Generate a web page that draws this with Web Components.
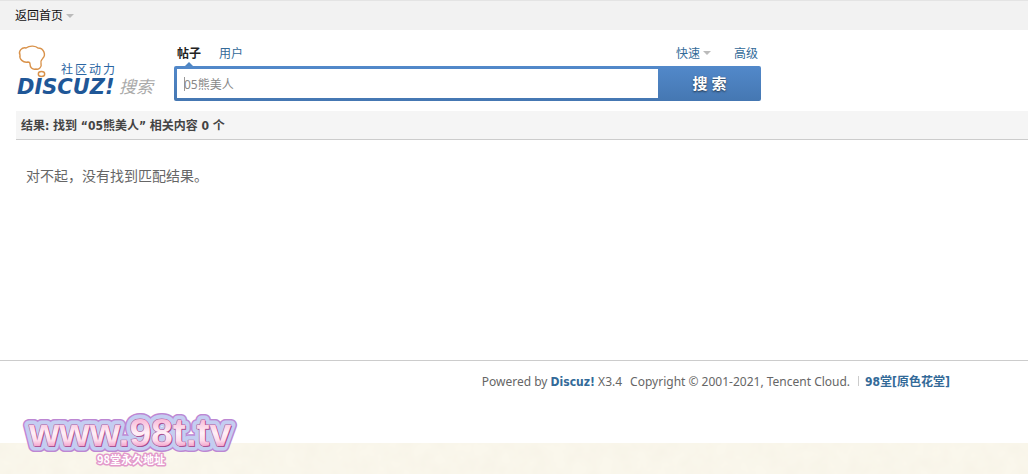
<!DOCTYPE html>
<html lang="zh-CN">
<head>
<meta charset="utf-8">
<title>搜索</title>
<style>
    body {
        margin: 0;
        min-height: 100vh;
        display: flex;
        flex-direction: column;
        background: #fff;
        color: #444;
        font: 12px/16px "Noto Sans", "Noto Sans CJK SC", sans-serif;
    }
</style>
</head>
<body>
<app-toolbar>返回首页</app-toolbar>
<app-search>
    <app-logo slot="logo"></app-logo>
</app-search>
<app-results>
    <span slot="title">结果: 找到 “05熊美人” 相关内容 0 个</span>
    对不起，没有找到匹配结果。
</app-results>
<app-footer></app-footer>
<app-paper></app-paper>
<app-watermark></app-watermark>

<script>
class AppToolbar extends HTMLElement {
    constructor() {
        super();
        this.attachShadow({ mode: 'open' });
    }

    connectedCallback() {
        this.shadowRoot.innerHTML = `
        <style>
        :host {
            display: block;
            box-sizing: border-box;
            height: 30px;
            padding: 7px 15px;
            border-top: 1px solid #e4e4e4;
            background: #f2f2f2;
        }
        a {
            display: inline-flex;
            align-items: center;
            gap: 3px;
            color: #111;
            text-decoration: none;
        }
        a::after {
            content: "";
            border: 4px solid transparent;
            border-top-color: #bbb;
            border-bottom: 0;
        }
        </style>
        <a href="#"><slot></slot></a>`;
    }
}

class AppLogo extends HTMLElement {
    constructor() {
        super();
        this.attachShadow({ mode: 'open' });
    }

    connectedCallback() {
        this.shadowRoot.innerHTML = `
        <style>
        :host {
            display: block;
        }
        svg {
            display: block;
        }
        .name {
            font: italic bold 21px "DejaVu Sans", sans-serif;
            fill: #1f5797;
        }
        .motto {
            font: 12px "Noto Sans CJK SC", sans-serif;
            letter-spacing: 2px;
            fill: #2b66a3;
        }
        .part {
            font: italic 17px "Noto Sans CJK SC", sans-serif;
            fill: #aaa;
        }
        </style>
        <svg width="142" height="60" viewBox="0 0 142 60">
            <g fill="none" stroke="#d9924a" stroke-width="1.4">
                <path d="M12 22C7 23 3 19 4 15C2 11 6 7 10 8C14 5 20 6 22 8C28 8 30 15 27 18C26 20 24 21 25 23C26 27 23 30 20 29C16 30 14 27 14 24C14 22 13 22 12 22Z"/>
                <ellipse cx="25.500" cy="34" rx="3.200" ry="2.500"/>
            </g>
            <text class="motto" x="45" y="34">社区动力</text>
            <text class="name" x="1" y="54">DISCUZ!</text>
            <text class="part" x="103" y="53">搜索</text>
        </svg>`;
    }
}

class AppSearch extends HTMLElement {
    constructor() {
        super();
        this.attachShadow({ mode: 'open' });
    }

    connectedCallback() {
        this.shadowRoot.innerHTML = `
        <style>
        :host {
            display: flex;
            gap: 16px;
            padding: 10px 16px;
        }
        form {
            flex: 0 1 587px;
            padding-top: 6px;
        }
        nav {
            display: flex;
            gap: 18px;
            height: 20px;
            padding: 0 3px;
        }
        a {
            color: #336a98;
            text-decoration: none;
        }
        .current {
            position: relative;
            color: #222;
            font-weight: bold;
        }
        .current::after {
            content: "";
            position: absolute;
            left: 8px;
            bottom: 0;
            border: 4px solid transparent;
            border-top: 0;
            border-bottom-color: #4f86c2;
        }
        .quick {
            display: flex;
            gap: 3px;
            margin-left: auto;
            margin-right: 5px;
        }
        .quick::after {
            content: "";
            margin-top: 5px;
            align-self: flex-start;
            border: 4px solid transparent;
            border-top-color: #bbb;
            border-bottom: 0;
        }
        .box {
            display: flex;
            height: 29px;
            padding: 3px 0 3px 3px;
            border-radius: 2px;
            background: linear-gradient(#5289ca, #4577b2);
        }
        input {
            flex: 1;
            min-width: 0;
            padding: 2px 7px 0;
            border: 0;
            outline: 0;
            background: linear-gradient(#999, #999) 7px 50% / 1px 14px no-repeat #fff;
            color: #888;
            font: inherit;
        }
        button {
            width: 103px;
            padding: 0;
            border: 0;
            background: none;
            color: #fff;
            font: bold 15px/29px "Noto Sans", "Noto Sans CJK SC", sans-serif;
            text-shadow: 0 1px 2px #234;
        }
        </style>
        <slot name="logo"></slot>
        <form>
            <nav>
                <a class="current" href="#">帖子</a>
                <a href="#">用户</a>
                <a class="quick" href="#">快速</a>
                <a href="#">高级</a>
            </nav>
            <div class="box">
                <input type="text" value="05熊美人" aria-label="搜索">
                <button type="button">搜 索</button>
            </div>
        </form>`;
    }
}

class AppResults extends HTMLElement {
    constructor() {
        super();
        this.attachShadow({ mode: 'open' });
    }

    connectedCallback() {
        this.shadowRoot.innerHTML = `
        <style>
        :host {
            display: block;
            min-height: 249px;
            margin-left: 16px;
        }
        h2 {
            margin: 0;
            padding: 7px 5px 5px;
            border-bottom: 1px solid #ccc;
            background: #f5f5f5;
            font: bold 12px/16px "DejaVu Sans Condensed", "Noto Sans CJK SC", sans-serif;
        }
        p {
            margin: 0;
            padding: 26px 10px;
            color: #666;
            font-size: 14px;
            line-height: 20px;
        }
        </style>
        <h2><slot name="title"></slot></h2>
        <p><slot></slot></p>`;
    }
}

class AppFooter extends HTMLElement {
    constructor() {
        super();
        this.attachShadow({ mode: 'open' });
    }

    connectedCallback() {
        this.shadowRoot.innerHTML = `
        <style>
        :host {
            display: flex;
            justify-content: flex-end;
            gap: 8px;
            height: 69px;
            padding: 13px 78px 0 16px;
            border-top: 1px solid #ccc;
            color: #666;
        }
        a {
            color: #336a98;
            font-family: "DejaVu Sans Condensed", "Noto Sans CJK SC", sans-serif;
            font-weight: bold;
            text-decoration: none;
        }
        .site::before {
            content: "";
            display: inline-block;
            height: 10px;
            margin-right: 6px;
            border-left: 1px solid #ccc;
        }
        </style>
        <span>Powered by <a href="#">Discuz!</a> X3.4</span>
        <span>Copyright © 2001-2021, Tencent Cloud.</span>
        <span class="site"><a href="#">98堂[原色花堂]</a></span>`;
    }
}

class AppPaper extends HTMLElement {
    constructor() {
        super();
        this.attachShadow({ mode: 'open' });
    }

    connectedCallback() {
        this.shadowRoot.innerHTML = `
        <style>
        :host {
            display: block;
            flex: 1;
            min-height: 31px;
            background: #faf7ec;
        }
        svg {
            display: block;
            width: 100%;
            height: 31px;
        }
        </style>
        <svg aria-hidden="true">
            <filter id="grain" x="0" y="0" width="100%" height="100%">
                <feTurbulence type="fractalNoise" baseFrequency="0.060" numOctaves="3" seed="4"/>
                <feColorMatrix values="0 0 0 0 0.900  0 0 0 0 0.860  0 0 0 0 0.760  0.600 0 0 0 -0.150"/>
            </filter>
            <rect width="100%" height="100%" filter="url(#grain)"/>
        </svg>`;
    }
}

class AppWatermark extends HTMLElement {
    constructor() {
        super();
        this.attachShadow({ mode: 'open' });
    }

    connectedCallback() {
        this.shadowRoot.innerHTML = `
        <style>
        :host {
            position: absolute;
            left: 20px;
            top: 408px;
            pointer-events: none;
        }
        svg {
            display: block;
        }
        use {
            stroke-linejoin: round;
        }
        .site {
            font: bold 39px "Liberation Sans", sans-serif;
        }
        .note {
            font: bold 11px "Noto Sans CJK SC", sans-serif;
        }
        </style>
        <svg width="222" height="62" viewBox="0 0 222 62">
            <defs>
                <linearGradient id="pink" gradientUnits="userSpaceOnUse" x1="0" y1="10" x2="0" y2="40">
                    <stop offset="0" stop-color="#f7b4d5"/>
                    <stop offset="0.500" stop-color="#fff0f7"/>
                    <stop offset="0.750" stop-color="#fcdcec"/>
                    <stop offset="1" stop-color="#f194c4"/>
                </linearGradient>
                <text id="site" class="site" x="9" y="38">www.98t.tv</text>
                <text id="note" class="note" x="77" y="56">98堂永久地址</text>
            </defs>
            <use href="#site" fill="#bd87d3" stroke="#bd87d3" stroke-width="12"/>
            <use href="#site" fill="#c4cdf1" stroke="#c4cdf1" stroke-width="9"/>
            <use href="#site" x="1" y="1" fill="#9d4a8a"/>
            <use href="#site" fill="#b45c9c" stroke="#b45c9c" stroke-width="1"/>
            <use href="#site" fill="url(#pink)"/>
            <use href="#note" fill="#e39acb" stroke="#e39acb" stroke-width="3"/>
            <use href="#note" fill="#fff"/>
        </svg>`;
    }
}

window.customElements.define('app-toolbar', AppToolbar);
window.customElements.define('app-logo', AppLogo);
window.customElements.define('app-search', AppSearch);
window.customElements.define('app-results', AppResults);
window.customElements.define('app-footer', AppFooter);
window.customElements.define('app-paper', AppPaper);
window.customElements.define('app-watermark', AppWatermark);
</script>
</body>
</html>
